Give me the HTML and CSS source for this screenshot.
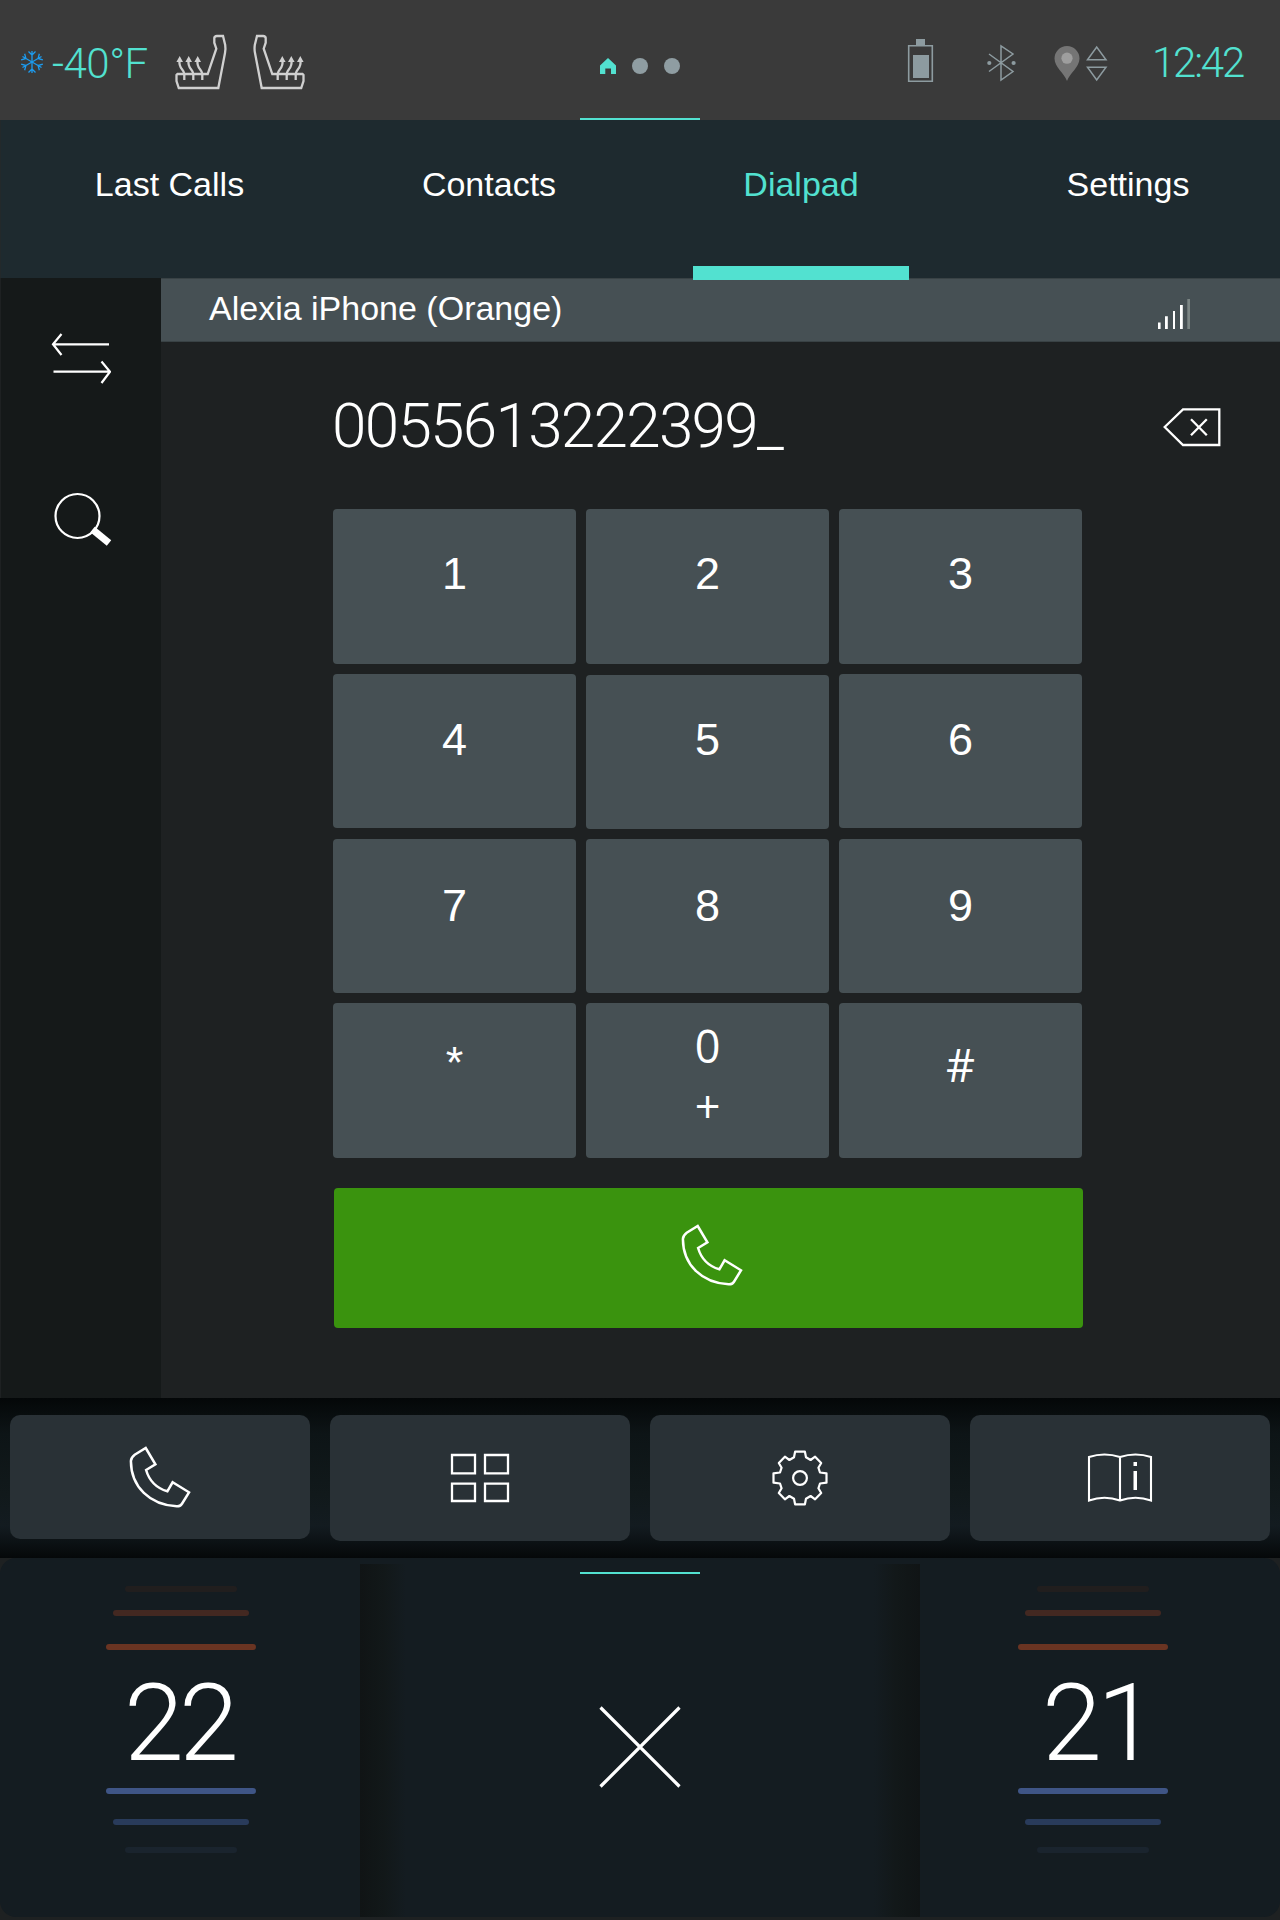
FILE: index.html
```html
<!DOCTYPE html>
<html lang="en">
<head>
<meta charset="utf-8">
<title>Dialpad</title>
<link rel="stylesheet" href="styles.css">
</head>
<body>
<svg class="defs" width="0" height="0">
  <symbol id="phone" viewBox="0 0 64 64"><path d="M17.7 3L27.4 19.3L18.1 25C21 35 28 43 39.4 46.3L44.6 37.3L61 47.3L54 58.7Q52 61.6 48.7 61.3C22 60 3 42 2.9 16Q3 12.5 6.7 9.7Z" fill="none" stroke="#fff" stroke-width="2.5"/></symbol>
  <symbol id="seat" viewBox="0 0 58 60">
    <g fill="none" stroke="#d0d0d0" stroke-width="2.3"><path d="M5.5 42H35.7L44.3 16.7L42.3 10.7V6Q42.5 4.3 45 4H51L53.2 13Q53.8 17 53 21L46.3 56H6.8L4.5 49V43Z"/>
    <path d="M12.3 48V42C12.3 37 6 37 7.7 28M21.3 48V42C21.3 37 15 37 16.7 28M30.3 48V42C30.3 37 24 37 25.7 28"/></g>
    <path d="M7.7 24L11 30H4.4ZM16.7 24L20 30H13.4ZM25.7 24L29 30H22.4Z" fill="#d0d0d0"/>
  </symbol>
</svg>
<div class="screen">
  <header class="status">
    <div class="status-left">
      <svg class="snow" width="24" height="24" viewBox="-12 -12 24 24"><g id="arm" fill="none" stroke="#1c9cf0" stroke-width="1.3"><path d="M0 -11V11M-3.5 -10.5L0 -7L3.5 -10.5M-3.5 10.5L0 7L3.5 10.5"/></g><use href="#arm" transform="rotate(60)"/><use href="#arm" transform="rotate(120)"/></svg>
      <span class="readout temp">-40°F</span>
      <svg class="seat-l" width="58" height="60"><use href="#seat"/></svg>
      <svg class="seat-r" width="58" height="60"><use href="#seat"/></svg>
    </div>
    <div class="pager">
      <div class="pages">
        <svg width="16" height="16" viewBox="0 0 16 16"><path d="M8 0L16 7.5V16H11V10.5H5.3V16H0V7.5Z" fill="#52e1d0"/></svg>
        <i class="dot"></i><i class="dot"></i>
      </div>
    </div>
    <div class="status-right">
      <svg class="battery" width="28" height="46" viewBox="0 0 28 46"><path d="M1.7 6.7H25.3V42.3H1.7Z" fill="none" stroke="#8d9ba0" stroke-width="1.6"/><path d="M9 0H18V6H9ZM6 16H22V39H6Z" fill="#8d9ba0"/></svg>
      <svg class="bt" width="30" height="38" viewBox="0 0 30 38"><path d="M3 10L27 27.5L15 36V2L27 10L3 27.5" fill="none" stroke="#8d9ba0" stroke-width="1.5"/><circle cx="3.3" cy="19" r="2.1" fill="#8d9ba0"/><circle cx="27.6" cy="19" r="2.1" fill="#8d9ba0"/></svg>
      <svg class="pin" width="56" height="38" viewBox="0 0 56 38"><path d="M15 36C12 28 2.5 22 2.5 13.5A12.5 12.5 0 0 1 27.5 13.5C27.5 22 18 28 15 36Z" fill="#757575"/><circle cx="15" cy="13.2" r="5.6" fill="#9e9e9e"/><path d="M35.5 14.7L44.7 2L54 14.7ZM35.5 22.2H54L44.7 35Z" fill="none" stroke="#8d9ba0" stroke-width="1.5"/></svg>
      <span class="readout clock">12:42</span>
    </div>
  </header>
  <nav class="tabs">
    <span class="tab">Last Calls</span>
    <span class="tab">Contacts</span>
    <span class="tab active">Dialpad</span>
    <span class="tab last">Settings</span>
  </nav>
  <div class="body">
    <aside class="side">
      <svg width="62" height="54" viewBox="0 0 62 54"><path d="M60 13.3H4M12.5 3L4 13.3L12.5 24M4.5 40.7H61M52.5 30.5L61 40.7L52.5 52" fill="none" stroke="#fff" stroke-width="2.2"/></svg>
      <svg class="search" width="62" height="56" viewBox="0 0 62 56"><circle cx="27.5" cy="25" r="22" fill="none" stroke="#fff" stroke-width="2.2"/><path d="M42.5 38.5L59 52" stroke="#fff" stroke-width="7"/></svg>
    </aside>
    <main class="main">
      <div class="device"><span>Alexia iPhone (Orange)</span>
        <svg width="34" height="32" viewBox="0 0 34 32"><path d="M2 24.5H4.6V31H2ZM9 18.3H11.8V31H9ZM17 13H19V31H17ZM24 7H26.8V31H24Z" fill="#fff"/><path d="M31.3 1H34V31H31.3Z" fill="#7b8584"/></svg>
      </div>
      <div class="entry"><span class="number">0055613222399<span class="caret">_</span></span>
        <svg width="60" height="40" viewBox="0 0 60 40"><path d="M2.7 20L21 2.3H57.3V38H21ZM29 12.3L44.8 28.3M44.8 12.3L29 28.3" fill="none" stroke="#fff" stroke-width="2.3"/></svg>
      </div>
      <div class="keypad">
        <div class="key">1</div><div class="key">2</div><div class="key">3</div>
        <div class="key mid">4</div><div class="key low">5</div><div class="key mid">6</div>
        <div class="key third">7</div><div class="key third">8</div><div class="key third">9</div>
        <div class="key star">*</div><div class="key zero">0<br>+</div><div class="key hash">#</div>
      </div>
      <div class="call"><svg width="64" height="64"><use href="#phone"/></svg></div>
    </main>
  </div>
  <div class="dock">
    <div class="dock-btn short"><svg width="64" height="64"><use href="#phone"/></svg></div>
    <div class="dock-btn"><svg width="60" height="50" viewBox="0 0 60 50"><path d="M2 2H25V20.3H2ZM35 2H58V20.3H35ZM2 30.7H25V48H2ZM35 30.7H58V48H35Z" fill="none" stroke="#fff" stroke-width="2.3"/></svg></div>
    <div class="dock-btn"><svg width="58" height="58" viewBox="-29 -29 58 58"><path d="M-4.9 -26.3H4.9L6 -20.7L10.6 -18L15.1 -21.3L21.2 -15L18.4 -10.3L20 -5.5L26.5 -4.7V4.7L20 5.5L18.4 10.3L21.2 15L15.1 21.3L10.6 18L6 20.7L4.9 26.3H-4.9L-6 20.7L-10.6 18L-15.1 21.3L-21.2 15L-18.4 10.3L-20 5.5L-26.5 4.7V-4.7L-20 -5.5L-18.4 -10.3L-21.2 -15L-15.1 -21.3L-10.6 -18L-6 -20.7Z" fill="none" stroke="#fff" stroke-width="2.2" stroke-linejoin="round"/><circle r="6.9" fill="none" stroke="#fff" stroke-width="2.2"/></svg></div>
    <div class="dock-btn"><svg width="66" height="52" viewBox="0 0 66 52"><path d="M2 5Q17.5 0 33 5Q48.5 0 64 5V48.5Q48.5 43 33 48.5Q17.5 43 2 48.5ZM33 5V48.5" fill="none" stroke="#fff" stroke-width="2.1"/><path d="M46.5 10H50V14H46.5ZM46.5 19H50V38H46.5Z" fill="#fff"/></svg></div>
  </div>
  <footer class="climate">
    <div class="zone"><i class="bar w1 h1"></i><i class="bar w2 h2"></i><i class="bar w3 h3"></i><span class="deg">22</span><i class="bar w3 c3"></i><i class="bar w2 c2"></i><i class="bar w1 c1"></i></div>
    <div class="middle"><svg width="84" height="84" viewBox="0 0 84 84"><path d="M2.5 2.5L81.5 81.5M81.5 2.5L2.5 81.5" stroke="#fff" stroke-width="3.2"/></svg></div>
    <div class="zone right"><i class="bar w1 h1"></i><i class="bar w2 h2"></i><i class="bar w3 h3"></i><span class="deg">21</span><i class="bar w3 c3"></i><i class="bar w2 c2"></i><i class="bar w1 c1"></i></div>
  </footer>
</div>
</body>
</html>
```
FILE: styles.css
```css
* { box-sizing: border-box; }
body { margin: 0; background: #1e2122; color: #fff; font-family: "Liberation Sans", Arial, sans-serif; }
svg { display: block; flex: none; }
.defs { position: absolute; }
.screen { width: 1280px; height: 1920px; overflow: hidden; display: flex; flex-direction: column; }

.status { height: 120px; flex: none; background: #3a3a3a; display: grid; grid-template-columns: 580px 120px 580px; }
.status-left, .status-right { display: flex; align-items: flex-start; }
.snow { margin: 50px 0 0 20px; }
.readout { font-family: Roboto, sans-serif; font-weight: 300; font-size: 42px; line-height: 50px; color: #52e1d0; white-space: nowrap; }
.temp { margin: 39px 0 0 8px; width: 120px; letter-spacing: -.5px; }
.seat-l { margin-top: 32px; }
.seat-r { margin: 32px 0 0 20px; transform: scaleX(-1); }
.pager { border-bottom: 2px solid #52e1d0; }
.pages { display: flex; gap: 16px; padding: 58px 0 0 20px; }
.dot { width: 16px; height: 16px; border-radius: 50%; background: #8f9da2; }
.battery { margin: 39px 0 0 207px; }
.bt { margin: 44px 0 0 51px; }
.pin { margin: 45px 0 0 36px; }
.clock { margin: 38px 0 0 44px; letter-spacing: -2.2px; }

.tabs { height: 158px; flex: none; background: #1e2a2f; border-left: 1px solid #23292b; display: grid; grid-template-columns: 337px 302px 322px 318px; }
.tab { font-size: 34px; line-height: 128px; text-align: center; }
.tab.last { padding-left: 14px; }
.tab.active { color: #52e1d0; }
.tab.active::after { content: ""; display: block; position: relative; width: 216px; height: 14px; margin: 18px auto 0; background: #52e1d0; }

.body { height: 1120px; flex: none; display: grid; grid-template-columns: 161px 1119px; }
.side { background: #151919; border-left: 1px solid #1e2122; padding: 53px 0 0 48px; }
.search { margin: 106px 0 0 1px; }
.main { background: #1e2122; }
.device { height: 64px; background: #465054; border-top: 1px solid #394245; border-bottom: 1px solid #394245; display: flex; justify-content: space-between; padding: 0 90px 0 48px; font-size: 34px; line-height: 58px; }
.device svg { margin-top: 19px; }
.entry { height: 167px; display: flex; justify-content: space-between; padding: 0 58px 0 171px; }
.entry svg { margin-top: 65px; }
.number { font-family: Roboto, sans-serif; font-weight: 300; font-size: 62px; line-height: 74px; padding-top: 47px; letter-spacing: -1.7px; white-space: nowrap; }
.keypad { display: grid; grid-template-columns: repeat(3, 243px); grid-auto-rows: 154.5px; gap: 10.3px 10px; padding-left: 172px; }
.key { background: #465054; border-radius: 4px; text-align: center; font-size: 45px; line-height: 129px; }
.key.mid { line-height: 131px; }
.key.low { margin: 1px 0 -1px; }
.key.third { line-height: 133px; }
.key.star { line-height: 120px; }
.key.zero { font-family: "Open Sans", sans-serif; line-height: 60px; padding-top: 13px; }
.key.hash { font-family: "Open Sans", sans-serif; line-height: 123px; }
.call { width: 749px; height: 140px; margin: 30.6px 0 0 173px; background: #3a930e; border-radius: 4px; padding: 35px 0 0 346px; }

.dock { height: 160px; flex: none; background: linear-gradient(#040708, #0d1416 22%, #11191b 60%, #131b20 80%, #050809 100%); padding: 17px 10px; display: grid; grid-template-columns: repeat(4, 300px); gap: 20px; }
.dock-btn { height: 126px; border-radius: 10px; background: #293136; display: flex; align-items: center; justify-content: center; }
.dock-btn.short { height: 124px; }

.climate { height: 359px; flex: none; background: #141c21; border-radius: 16px; display: grid; grid-template-columns: 360px 560px 360px; }
.zone { display: flex; flex-direction: column; align-items: center; padding: 28px 0 0 2px; }
.zone.right { padding: 28px 14px 0 0; }
.bar { flex: none; height: 6px; border-radius: 3px; }
.w1 { width: 112px; } .w2 { width: 136px; } .w3 { width: 150px; }
.h1 { background: #211e1e; } .h2 { background: #432821; margin-top: 18px; } .h3 { background: #6a3422; margin-top: 28px; }
.c3 { background: #3f5586; } .c2 { background: #293b5b; margin-top: 25px; } .c1 { background: #1a242e; margin-top: 22px; }
.deg { font-family: Roboto, sans-serif; font-weight: 300; font-size: 108px; line-height: 146px; height: 138px; letter-spacing: -5px; margin-right: 4px; flex: none; }
.right .deg { margin: 0 0 0 8px; }
.middle { margin-top: 6px; background: linear-gradient(90deg, #101415, #121819 24px, #141c21 46px, #141c21 514px, #121819 536px, #101415); display: flex; flex-direction: column; align-items: center; }
.middle::before { content: ""; width: 120px; height: 2px; margin: 8px 0 131px; background: #52e1d0; }
```
